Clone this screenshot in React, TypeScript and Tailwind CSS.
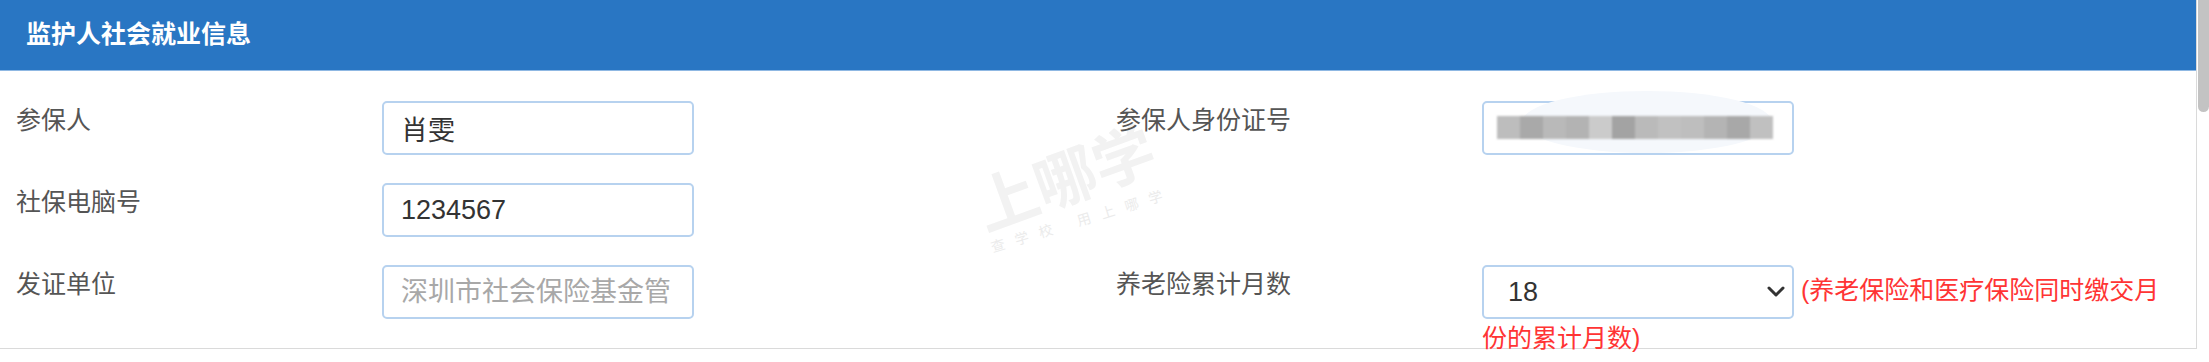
import React from 'react';

const FONT = "font-['Liberation_Sans','Noto_Sans_CJK_SC',sans-serif]";

const MOSAIC = [
  '#bdbdbd', '#a9a9a9', '#b9b9b9', '#b3b3b3', '#cbcbcb', '#a3a3a3',
  '#bababa', '#c1c1c1', '#bebebe', '#b4b4b4', '#a8a8a8', '#c0c0c0',
];

function Label({ text }: { text: string }) {
  return (
    <div className="w-[382px] shrink-0 pl-[16px] text-[25px] leading-[38px] text-[#555]">
      {text}
    </div>
  );
}

function TextInput({ value, placeholder }: { value?: string; placeholder?: string }) {
  return (
    <input
      readOnly
      value={value ?? ''}
      placeholder={placeholder}
      className="w-[312px] h-[54px] rounded-[5px] border-2 border-[#b7d2ef] bg-white pl-[17px] pr-[22px] text-[27px] text-[#333] outline-none placeholder:text-[#a8a8a8]"
    />
  );
}

export default function App() {
  return (
    <div className={`flex w-[2209px] h-[362px] bg-white ${FONT}`}>
      <div className="relative flex-1">
        {/* watermark, painted under the form */}
        <div className="pointer-events-none absolute left-[1066px] top-[180px] -translate-x-1/2 -translate-y-1/2 -rotate-[20deg] text-[62px] font-bold leading-none text-[#f2f2f2] whitespace-nowrap">
          上哪学
        </div>
        <div className="pointer-events-none absolute left-[1082px] top-[220px] -translate-x-1/2 -translate-y-1/2 -rotate-[17deg] text-[14px] leading-none tracking-[11px] text-[#ebebeb] whitespace-nowrap">
          查学校 用上哪学
        </div>

        <div className="relative h-[349px] border-r border-b border-[#dadada]">
          <div className="h-[71px] flex items-center pl-[26px] bg-[#2976c3] border-b border-[#8fb8e3]">
            <span className="text-[25px] font-bold text-white">监护人社会就业信息</span>
          </div>

          <div className="pt-[30px] flex flex-col gap-[28px]">
            {/* row 1 */}
            <div className="flex h-[54px]">
              <div className="w-[1100px] flex">
                <Label text="参保人" />
                <TextInput value="肖雯" />
              </div>
              <div className="flex-1 flex">
                <Label text="参保人身份证号" />
                <div className="relative w-[312px] h-[54px] rounded-[5px] border-2 border-[#b7d2ef] bg-white">
                  <div className="absolute left-[38px] -top-[12px] w-[250px] h-[62px] rounded-[50%] bg-[#f5f8fc]" />
                  <div className="relative flex ml-[13px] mt-[13px] h-[23px] blur-[1px]">
                    {MOSAIC.map((c, i) => (
                      <div key={i} className="w-[23px] h-full" style={{ backgroundColor: c }} />
                    ))}
                  </div>
                </div>
              </div>
            </div>

            {/* row 2 */}
            <div className="flex h-[54px]">
              <div className="w-[1100px] flex">
                <Label text="社保电脑号" />
                <TextInput value="1234567" />
              </div>
              <div className="flex-1" />
            </div>

            {/* row 3 */}
            <div className="flex">
              <div className="w-[1100px] flex">
                <Label text="发证单位" />
                <TextInput placeholder="深圳市社会保险基金管理局" />
              </div>
              <div className="flex-1 flex">
                <Label text="养老险累计月数" />
                <div className="flex-1 pr-[20px] text-[25px] leading-[38px] text-[#ff3434]">
                  <span className="relative inline-block align-middle">
                    <select
                      defaultValue="18"
                      className="w-[312px] h-[54px] appearance-none rounded-[5px] border-2 border-[#b7d2ef] bg-white pl-[24px] text-[27px] text-[#333] outline-none"
                    >
                      <option value="18">18</option>
                    </select>
                    <svg
                      className="absolute right-[8px] top-[20px] pointer-events-none"
                      width="20"
                      height="14"
                      viewBox="0 0 20 14"
                      fill="none"
                      stroke="#333"
                      strokeWidth="3"
                      strokeLinecap="round"
                      strokeLinejoin="round"
                    >
                      <path d="M3 3l7 7 7-7" />
                    </svg>
                  </span>{' '}
                  (养老保险和医疗保险同时缴交月份的累计月数)
                </div>
              </div>
            </div>
          </div>
        </div>
      </div>

      <div className="w-[12px] shrink-0 pl-[1px]">
        <div className="h-[112px] rounded-b-[6px] bg-[#c3c3c3]" />
      </div>
    </div>
  );
}
